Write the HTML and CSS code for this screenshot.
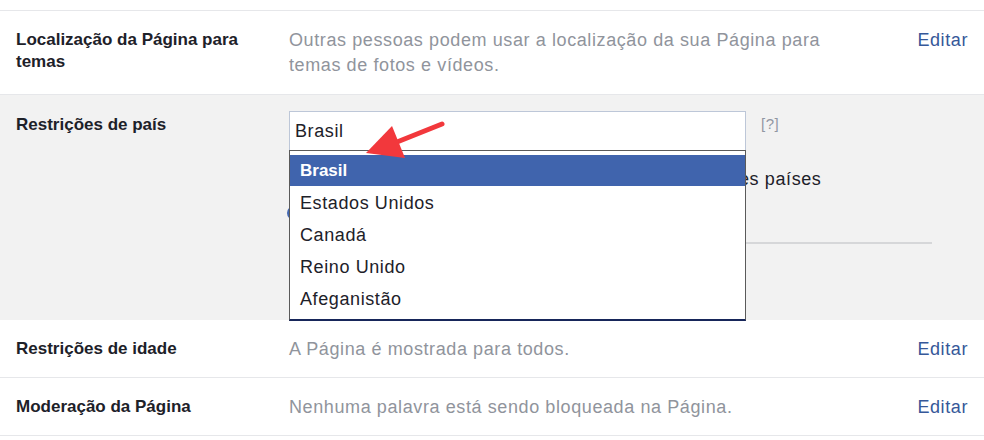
FILE: index.html
```html
<!DOCTYPE html>
<html lang="pt-BR">
<head>
<meta charset="utf-8">
<title>Configurações da Página</title>
<link rel="stylesheet" href="styles.css">
</head>
<body>
<div class="settings">
  <div class="top-gap"></div>

  <div class="row row-first">
    <div class="label">Localização da Página para temas</div>
    <div class="desc desc-wrap">Outras pessoas podem usar a localização da sua Página para temas de fotos e vídeos.</div>
    <a class="edit" href="#">Editar</a>
  </div>

  <div class="row row-open">
    <div class="label label-open">Restrições de país</div>
    <div class="field">
      <div class="input-line">
        <div class="input">Brasil</div>
        <span class="help">[?]</span>
      </div>
      <div class="option">
        <span class="radio"></span>
        <span class="option-text">Mostrar a Página somente para os visitantes destes países</span>
      </div>
      <div class="option option-second">
        <span class="radio radio-on"></span>
      </div>
      <div class="sep"></div>

      <ul class="dropdown">
        <li class="item item-active">Brasil</li>
        <li class="item">Estados Unidos</li>
        <li class="item">Canadá</li>
        <li class="item">Reino Unido</li>
        <li class="item">Afeganistão</li>
      </ul>

      <svg class="pointer" width="100" height="60" viewBox="0 0 100 60" aria-hidden="true">
        <line x1="93" y1="13" x2="38" y2="35" stroke="#f2383c" stroke-width="5" stroke-linecap="round"/>
        <polygon points="17,42 43,15 56,47" fill="#f2383c"/>
      </svg>
    </div>
  </div>

  <div class="row row-short">
    <div class="label">Restrições de idade</div>
    <div class="desc">A Página é mostrada para todos.</div>
    <a class="edit" href="#">Editar</a>
  </div>

  <div class="row row-short">
    <div class="label">Moderação da Página</div>
    <div class="desc">Nenhuma palavra está sendo bloqueada na Página.</div>
    <a class="edit" href="#">Editar</a>
  </div>
</div>
</body>
</html>
```

FILE: styles.css
```css
* {
  box-sizing: border-box;
}

html, body {
  margin: 0;
  padding: 0;
  background: #ffffff;
}

body {
  font-family: "Liberation Sans", Arial, Helvetica, sans-serif;
  font-size: 18px;
  line-height: 22px;
  letter-spacing: 0.6px;
  color: #1d2129;
  overflow: hidden;
}

.settings {
  width: 984px;
}

.top-gap {
  height: 11px;
  border-bottom: 1px solid #e6e7ea;
}

.row {
  display: flex;
  align-items: flex-start;
  padding: 18px 16px 22px 16px;
  border-bottom: 1px solid #e6e7ea;
}

.row-first {
  padding-bottom: 16px;
}

.row-short {
  padding: 18px 16px 17px 16px;
}

.label {
  width: 273px;
  flex: none;
  padding-right: 20px;
  font-weight: bold;
  font-size: 17px;
  letter-spacing: 0;
  color: #1d2129;
}

.desc {
  flex: 1;
  color: #90949c;
}

.desc-wrap {
  line-height: 25px;
  margin-top: -1px;
  padding-right: 80px;
}

.edit {
  flex: none;
  color: #365899;
  text-decoration: none;
}

/* open row */
.row-open {
  background: #f2f2f2;
  padding: 16px 16px 0 16px;
  height: 225px;
  border-bottom: none;
}

.label-open {
  padding-top: 3px;
}

.field {
  position: relative;
  flex: 1;
}

.input-line {
  display: flex;
  align-items: flex-start;
  gap: 15px;
}

.input {
  width: 457px;
  height: 40px;
  border: 1px solid #bdc7d8;
  background: #ffffff;
  padding: 8px 5px;
  color: #1d2129;
}

.help {
  font-size: 15px;
  letter-spacing: 0.5px;
  color: #9197a3;
  padding-top: 2px;
}

.option {
  display: flex;
  align-items: center;
  gap: 12px;
  margin-top: 17px;
  height: 22px;
  white-space: nowrap;
}

.option-second {
  margin-top: 12px;
  margin-left: -2px;
}

.option-text {
  color: #1d2129;
}

.radio {
  width: 14px;
  height: 14px;
  border-radius: 50%;
  border: 1px solid #9197a3;
  background: #ffffff;
  flex: none;
}

.radio-on {
  border: 4px solid #4267b2;
}

.sep {
  margin-top: 18px;
  width: 643px;
  height: 2px;
  background: #d6d7d9;
}

/* overlay list */
.dropdown {
  position: absolute;
  top: 39px;
  left: 0;
  width: 457px;
  margin: 0;
  padding: 4px 0 4px 0;
  list-style: none;
  background: #ffffff;
  border: 1px solid #5a5a5a;
  border-bottom: 2px solid #17265a;
}

.item {
  height: 32px;
  line-height: 32px;
  padding-left: 10px;
  color: #1d2129;
}

.item-active {
  background: #4064ad;
  color: #ffffff;
  font-weight: bold;
  font-size: 17px;
  letter-spacing: 0;
  height: 31px;
  line-height: 31px;
  margin-bottom: 1px;
}

.pointer {
  position: absolute;
  left: 60px;
  top: 0;
}
```
